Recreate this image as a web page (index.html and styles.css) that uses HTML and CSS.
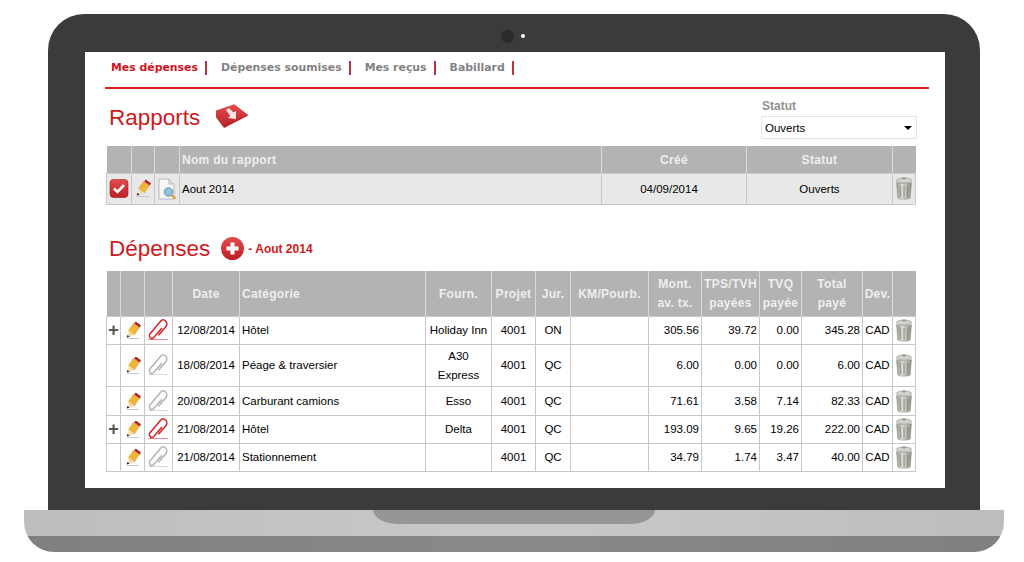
FILE: index.html
```html
<!DOCTYPE html>
<html lang="en">
<head>
    <meta charset="UTF-8">
    <title>Rapports et dépenses</title>
    <link rel="stylesheet" href="styles.css">
</head>
<body>
    <svg class="defs" width="0" height="0">
        <defs>
            <linearGradient id="redFill" x1="0" y1="0" x2="0" y2="1">
                <stop offset="0" stop-color="#e54c50"/>
                <stop offset="1" stop-color="#b92025"/>
            </linearGradient>
            <linearGradient id="trashFill" x1="0" y1="0" x2="1" y2="0">
                <stop offset="0" stop-color="#9a9a92"/>
                <stop offset="0.4" stop-color="#dcdcd6"/>
                <stop offset="1" stop-color="#8c8c84"/>
            </linearGradient>
            <symbol id="pencil" viewBox="0 0 18 21">
                <path d="M2 19.500h14" stroke="#c8c8c8" stroke-width="1.200"/>
                <path d="M4 10.500 10 2l6.500 4.500-6 9z" fill="#f0b537" stroke="#cf9420" stroke-width=".5"/>
                <path d="M10.500 2.500 12 .5l6 4-1.500 2.500z" fill="#ad2430"/>
                <path d="M4 10.500l6.500 5-7 2.500z" fill="#f3dcae"/>
                <path d="M2.800 15.500l2.400 1.800-3.400 1.200z" fill="#222"/>
            </symbol>
            <symbol id="clip" viewBox="0 0 24 25">
                <path d="M12.350 17.050 20.050 9.350A3.500 3.500 0 0 0 15.150 4.450L3.950 15.650A2.500 2.500 0 0 0 7.450 19.150L15.850 10.750" transform="translate(-1 -2.500) scale(1 1.170)" fill="none" stroke="currentColor" stroke-width="1.400"/>
                <path d="M1 21.500h20" stroke="currentColor" stroke-width="1" opacity=".5"/>
            </symbol>
            <symbol id="trash" viewBox="0 0 18 23">
                <ellipse cx="9" cy="3.500" rx="7.500" ry="2.500" fill="#d4d4ce" stroke="#8a8a82" stroke-width=".6"/>
                <rect x="7" y="0.500" width="4" height="2" rx="1" fill="#9a9a92"/>
                <path d="M1.500 5.500c2 1.500 13 1.500 15 0l-1.300 15.500c-1.500 1.600-10.900 1.600-12.400 0z" fill="url(#trashFill)" stroke="#8a8a82" stroke-width=".5"/>
                <path d="M5 8.500l.5 11.500M9 9v11.500M13 8.500 12.500 20" stroke="#77776f" stroke-width="1" opacity=".7"/>
            </symbol>
        </defs>
    </svg>

    <div class="laptop">
        <div class="lid">
            <div class="camera-bar">
                <span class="lens"></span>
                <span class="led"></span>
            </div>
            <div class="screen">
                <ul class="tabs">
                    <li class="active">Mes dépenses</li>
                    <li>Dépenses soumises</li>
                    <li>Mes reçus</li>
                    <li>Babillard</li>
                </ul>

                <div class="reports-head">
                    <div class="title-line">
                        <h2>Rapports</h2>
                        <svg class="folder-icon" viewBox="0 0 34 25" width="34" height="25">
                            <path d="M1 6.500 18.500.5c.6-.2 1.100-.1 1.500.2L32.500 10.500c.6.500.5 1.100-.1 1.400L10 23.500c-.5.300-1 .2-1.300-.1L1.300 13.500c-.2-.3-.3-.5-.3-.8z" fill="url(#redFill)"/>
                            <path d="M1 12.500 9 22.500 32.500 10.800" fill="none" stroke="#a11a1f" stroke-width=".8" opacity=".5"/>
                            <path d="M11 6l3-2 4.500 4.500 2.500-1.700V15l-8.200-1 2.500-2z" fill="#f8e6e6"/>
                        </svg>
                    </div>
                    <div class="filter">
                        <label>Statut</label>
                        <div class="select">Ouverts<span class="caret"></span></div>
                    </div>
                </div>

                <table class="grid reports">
                    <thead>
                        <tr>
                            <th></th>
                            <th></th>
                            <th></th>
                            <th class="left">Nom du rapport</th>
                            <th>Créé</th>
                            <th>Statut</th>
                            <th></th>
                        </tr>
                    </thead>
                    <tbody>
                        <tr>
                            <td class="icon">
                                <svg viewBox="0 0 20 19" width="20" height="19">
                                    <rect x="1" y="0.500" width="18" height="18" rx="3.500" fill="url(#redFill)" stroke="#a81c20" stroke-width=".6"/>
                                    <path d="M5 9.500l3.500 3.500L15 6" fill="none" stroke="#fff" stroke-width="2.600"/>
                                </svg>
                            </td>
                            <td class="icon"><svg width="16" height="19"><use href="#pencil"/></svg></td>
                            <td class="icon">
                                <svg viewBox="0 0 21 22" width="21" height="22">
                                    <path d="M2 1h10l5 5v15H2z" fill="#f7f7f7" stroke="#a9a9a9" stroke-width=".8"/>
                                    <path d="M12 1v5h5" fill="#ddd" stroke="#a9a9a9" stroke-width=".8"/>
                                    <circle cx="11.500" cy="14" r="4.200" fill="#8fc4dc" stroke="#5e93ad" stroke-width="1"/>
                                    <path d="M14.500 17.200l4 3.500" stroke="#e0a030" stroke-width="2.200"/>
                                </svg>
                            </td>
                            <td class="left">Aout 2014</td>
                            <td class="center created">04/09/2014</td>
                            <td class="center">Ouverts</td>
                            <td class="icon"><svg width="18" height="23"><use href="#trash"/></svg></td>
                        </tr>
                    </tbody>
                </table>

                <div class="expenses-head">
                    <h2>Dépenses</h2>
                    <svg class="plus-icon" viewBox="0 0 23 23" width="23" height="23">
                        <circle cx="11.500" cy="11.500" r="11.500" fill="url(#redFill)"/>
                        <path d="M11.500 5.500v12M5.500 11.500h12" stroke="#fff" stroke-width="4"/>
                    </svg>
                    <span class="subtitle">- Aout 2014</span>
                </div>

                <table class="grid expenses">
                    <thead>
                        <tr>
                            <th></th>
                            <th></th>
                            <th></th>
                            <th>Date</th>
                            <th class="left">Catégorie</th>
                            <th>Fourn.</th>
                            <th>Projet</th>
                            <th>Jur.</th>
                            <th>KM/Pourb.</th>
                            <th>Mont.<br>av. tx.</th>
                            <th>TPS/TVH<br>payées</th>
                            <th>TVQ<br>payée</th>
                            <th>Total<br>payé</th>
                            <th>Dev.</th>
                            <th></th>
                        </tr>
                    </thead>
                    <tbody>
                        <tr>
                            <td class="center plus">+</td>
                            <td class="icon"><svg width="16" height="19"><use href="#pencil"/></svg></td>
                            <td class="icon"><svg class="clip-on" width="24" height="25"><use href="#clip"/></svg></td>
                            <td class="center">12/08/2014</td>
                            <td class="left">Hôtel</td>
                            <td class="center">Holiday Inn</td>
                            <td class="center">4001</td>
                            <td class="center">ON</td>
                            <td></td>
                            <td class="num">305.56</td>
                            <td class="num">39.72</td>
                            <td class="num">0.00</td>
                            <td class="num">345.28</td>
                            <td class="center">CAD</td>
                            <td class="icon"><svg width="18" height="23"><use href="#trash"/></svg></td>
                        </tr>
                        <tr class="tall">
                            <td></td>
                            <td class="icon"><svg width="16" height="19"><use href="#pencil"/></svg></td>
                            <td class="icon"><svg class="clip-off" width="24" height="25"><use href="#clip"/></svg></td>
                            <td class="center">18/08/2014</td>
                            <td class="left">Péage &amp; traversier</td>
                            <td class="center">A30<br>Express</td>
                            <td class="center">4001</td>
                            <td class="center">QC</td>
                            <td></td>
                            <td class="num">6.00</td>
                            <td class="num">0.00</td>
                            <td class="num">0.00</td>
                            <td class="num">6.00</td>
                            <td class="center">CAD</td>
                            <td class="icon"><svg width="18" height="23"><use href="#trash"/></svg></td>
                        </tr>
                        <tr class="wide">
                            <td></td>
                            <td class="icon"><svg width="16" height="19"><use href="#pencil"/></svg></td>
                            <td class="icon"><svg class="clip-off" width="24" height="25"><use href="#clip"/></svg></td>
                            <td class="center">20/08/2014</td>
                            <td class="left">Carburant camions</td>
                            <td class="center">Esso</td>
                            <td class="center">4001</td>
                            <td class="center">QC</td>
                            <td></td>
                            <td class="num">71.61</td>
                            <td class="num">3.58</td>
                            <td class="num">7.14</td>
                            <td class="num">82.33</td>
                            <td class="center">CAD</td>
                            <td class="icon"><svg width="18" height="23"><use href="#trash"/></svg></td>
                        </tr>
                        <tr>
                            <td class="center plus">+</td>
                            <td class="icon"><svg width="16" height="19"><use href="#pencil"/></svg></td>
                            <td class="icon"><svg class="clip-on" width="24" height="25"><use href="#clip"/></svg></td>
                            <td class="center">21/08/2014</td>
                            <td class="left">Hôtel</td>
                            <td class="center">Delta</td>
                            <td class="center">4001</td>
                            <td class="center">QC</td>
                            <td></td>
                            <td class="num">193.09</td>
                            <td class="num">9.65</td>
                            <td class="num">19.26</td>
                            <td class="num">222.00</td>
                            <td class="center">CAD</td>
                            <td class="icon"><svg width="18" height="23"><use href="#trash"/></svg></td>
                        </tr>
                        <tr>
                            <td></td>
                            <td class="icon"><svg width="16" height="19"><use href="#pencil"/></svg></td>
                            <td class="icon"><svg class="clip-off" width="24" height="25"><use href="#clip"/></svg></td>
                            <td class="center">21/08/2014</td>
                            <td class="left">Stationnement</td>
                            <td></td>
                            <td class="center">4001</td>
                            <td class="center">QC</td>
                            <td></td>
                            <td class="num">34.79</td>
                            <td class="num">1.74</td>
                            <td class="num">3.47</td>
                            <td class="num">40.00</td>
                            <td class="center">CAD</td>
                            <td class="icon"><svg width="18" height="23"><use href="#trash"/></svg></td>
                        </tr>
                    </tbody>
                </table>
            </div>
        </div>
        <div class="base">
            <div class="base-top"><div class="notch"></div></div>
            <div class="base-bottom"></div>
        </div>
    </div>
</body>
</html>
```

FILE: styles.css
```css
* {
    box-sizing: border-box;
}

html, body {
    height: 100%;
}

body {
    margin: 0;
    background-color: #fff;
    color: #000;
    font-family: "Liberation Sans", Arial, sans-serif;
    font-size: 11.5px;
    overflow: hidden;
}

.defs {
    display: block;
    height: 0;
}

.laptop {
    width: 980px;
    margin: 14px 0 0 24px;
}

.lid {
    width: 932px;
    height: 496px;
    margin-left: 24px;
    padding: 0 35px 22px 37px;
    background-color: #3b3b3b;
    border-radius: 36px 36px 0 0;
}

.camera-bar {
    display: flex;
    align-items: center;
    height: 38px;
    padding: 6px 0 0 416px;
}

.lens {
    width: 13px;
    height: 13px;
    border-radius: 50%;
    background-color: #2a2a2a;
}

.led {
    width: 4px;
    height: 4px;
    margin-left: 7px;
    border-radius: 50%;
    background-color: #fff;
}

.screen {
    height: 436px;
    padding: 0 16px 0 21px;
    background-color: #fff;
}

/* top tabs */
.tabs {
    display: flex;
    align-items: center;
    height: 37px;
    margin: 0 0 0 -1px;
    padding: 0 0 3px 6px;
    list-style: none;
    border-bottom: 2px solid #e2211f;
    font-family: "DejaVu Sans", Verdana, sans-serif;
    font-size: 10.9px;
    font-weight: bold;
    color: #828282;
}

.tabs li {
    height: 14px;
    line-height: 13px;
    margin-right: 14px;
    padding-right: 7px;
    border-right: 2px solid #b8333a;
}

.tabs .active {
    color: #d0141c;
}

h2 {
    margin: 0;
    font-size: 22.5px;
    font-weight: normal;
    color: #cd1a20;
}

.reports-head {
    display: flex;
    justify-content: space-between;
    height: 57px;
    padding-left: 3px;
}

.title-line {
    display: flex;
    align-items: flex-start;
    padding-top: 15px;
}

.title-line h2 {
    line-height: 28px;
}

.folder-icon {
    margin: 0 0 0 15px;
}

.filter {
    width: 156px;
    margin-right: 12px;
    padding-top: 10px;
}

.filter label {
    display: block;
    height: 17px;
    padding-left: 1px;
    line-height: 15px;
    font-size: 12px;
    font-weight: bold;
    color: #909090;
}

.select {
    display: flex;
    align-items: center;
    justify-content: space-between;
    height: 23px;
    padding: 0 4px 0 3px;
    border: 1px solid #e3e3e3;
}

.caret {
    width: 0;
    height: 0;
    border-left: 4px solid transparent;
    border-right: 4px solid transparent;
    border-top: 4px solid #000;
}

/* tables */
.grid {
    width: 809px;
    border-collapse: collapse;
    table-layout: fixed;
}

.grid th {
    padding: 2px 0 0;
    background-color: #b3b3b3;
    border-left: 1px solid #d9d9d9;
    border-right: 1px solid #d9d9d9;
    color: #eee;
    font-size: 12px;
    font-weight: bold;
    letter-spacing: .3px;
    line-height: 19px;
    text-align: center;
}

.grid th:first-child {
    border-left: none;
}

.grid th:last-child {
    border-right: none;
}

.grid th.left {
    padding-left: 2px;
    text-align: left;
}

.grid td {
    padding: 0 2px;
    border: 1px solid #c8c8c8;
    line-height: 19px;
    white-space: nowrap;
}

.grid svg {
    display: block;
    margin: 0 auto;
}

.grid td.icon {
    padding: 0;
}

.center {
    text-align: center;
}

.num {
    text-align: right;
}

.grid td.plus {
    padding: 0;
    font-size: 18px;
    font-weight: bold;
    color: #555;
}

.clip-on {
    color: #d8252b;
}

.clip-off {
    color: #b5b5b5;
}

.reports th {
    height: 27px;
}

.reports td {
    height: 31px;
    padding-top: 1px;
    background-color: #e8e8e8;
}

.reports td.created {
    padding-right: 12px;
}

.reports th:nth-child(1) { width: 25px; }
.reports th:nth-child(2) { width: 23px; }
.reports th:nth-child(3) { width: 25px; }
.reports th:nth-child(4) { width: 422px; }
.reports th:nth-child(5) { width: 145px; }
.reports th:nth-child(6) { width: 146px; }
.reports th:nth-child(7) { width: 23px; }

.expenses-head {
    display: flex;
    align-items: center;
    height: 34px;
    margin-top: 27px;
    margin-bottom: 5px;
    padding: 1px 0 0 3px;
}

.plus-icon {
    margin: -1px 0 0 11px;
}

.subtitle {
    margin: 0 0 0 4px;
    font-size: 12px;
    font-weight: bold;
    color: #cd1a20;
}

.expenses th {
    height: 46px;
}

.expenses td {
    height: 28px;
}

.expenses .tall td {
    height: 42px;
}

.expenses .wide td {
    height: 29px;
}

.expenses th:nth-child(1) { width: 14px; }
.expenses th:nth-child(2) { width: 24px; }
.expenses th:nth-child(3) { width: 28px; }
.expenses th:nth-child(4) { width: 67px; }
.expenses th:nth-child(5) { width: 186px; }
.expenses th:nth-child(6) { width: 66px; }
.expenses th:nth-child(7) { width: 44px; }
.expenses th:nth-child(8) { width: 35px; }
.expenses th:nth-child(9) { width: 78px; }
.expenses th:nth-child(10) { width: 53px; }
.expenses th:nth-child(11) { width: 58px; }
.expenses th:nth-child(12) { width: 42px; }
.expenses th:nth-child(13) { width: 61px; }
.expenses th:nth-child(14) { width: 30px; }
.expenses th:nth-child(15) { width: 23px; }

/* laptop base */
.base {
    border-radius: 0 0 30px 30px;
    overflow: hidden;
}

.base-top {
    height: 26px;
    background: linear-gradient(to right, #bdbdbd, #c9c9c9 50%, #bdbdbd);
}

.notch {
    width: 282px;
    height: 14px;
    margin: 0 auto;
    background-color: #969696;
    border-radius: 0 0 26px 26px / 0 0 14px 14px;
}

.base-bottom {
    height: 16px;
    background: linear-gradient(to right, #808080, #898989 50%, #808080);
}
```
